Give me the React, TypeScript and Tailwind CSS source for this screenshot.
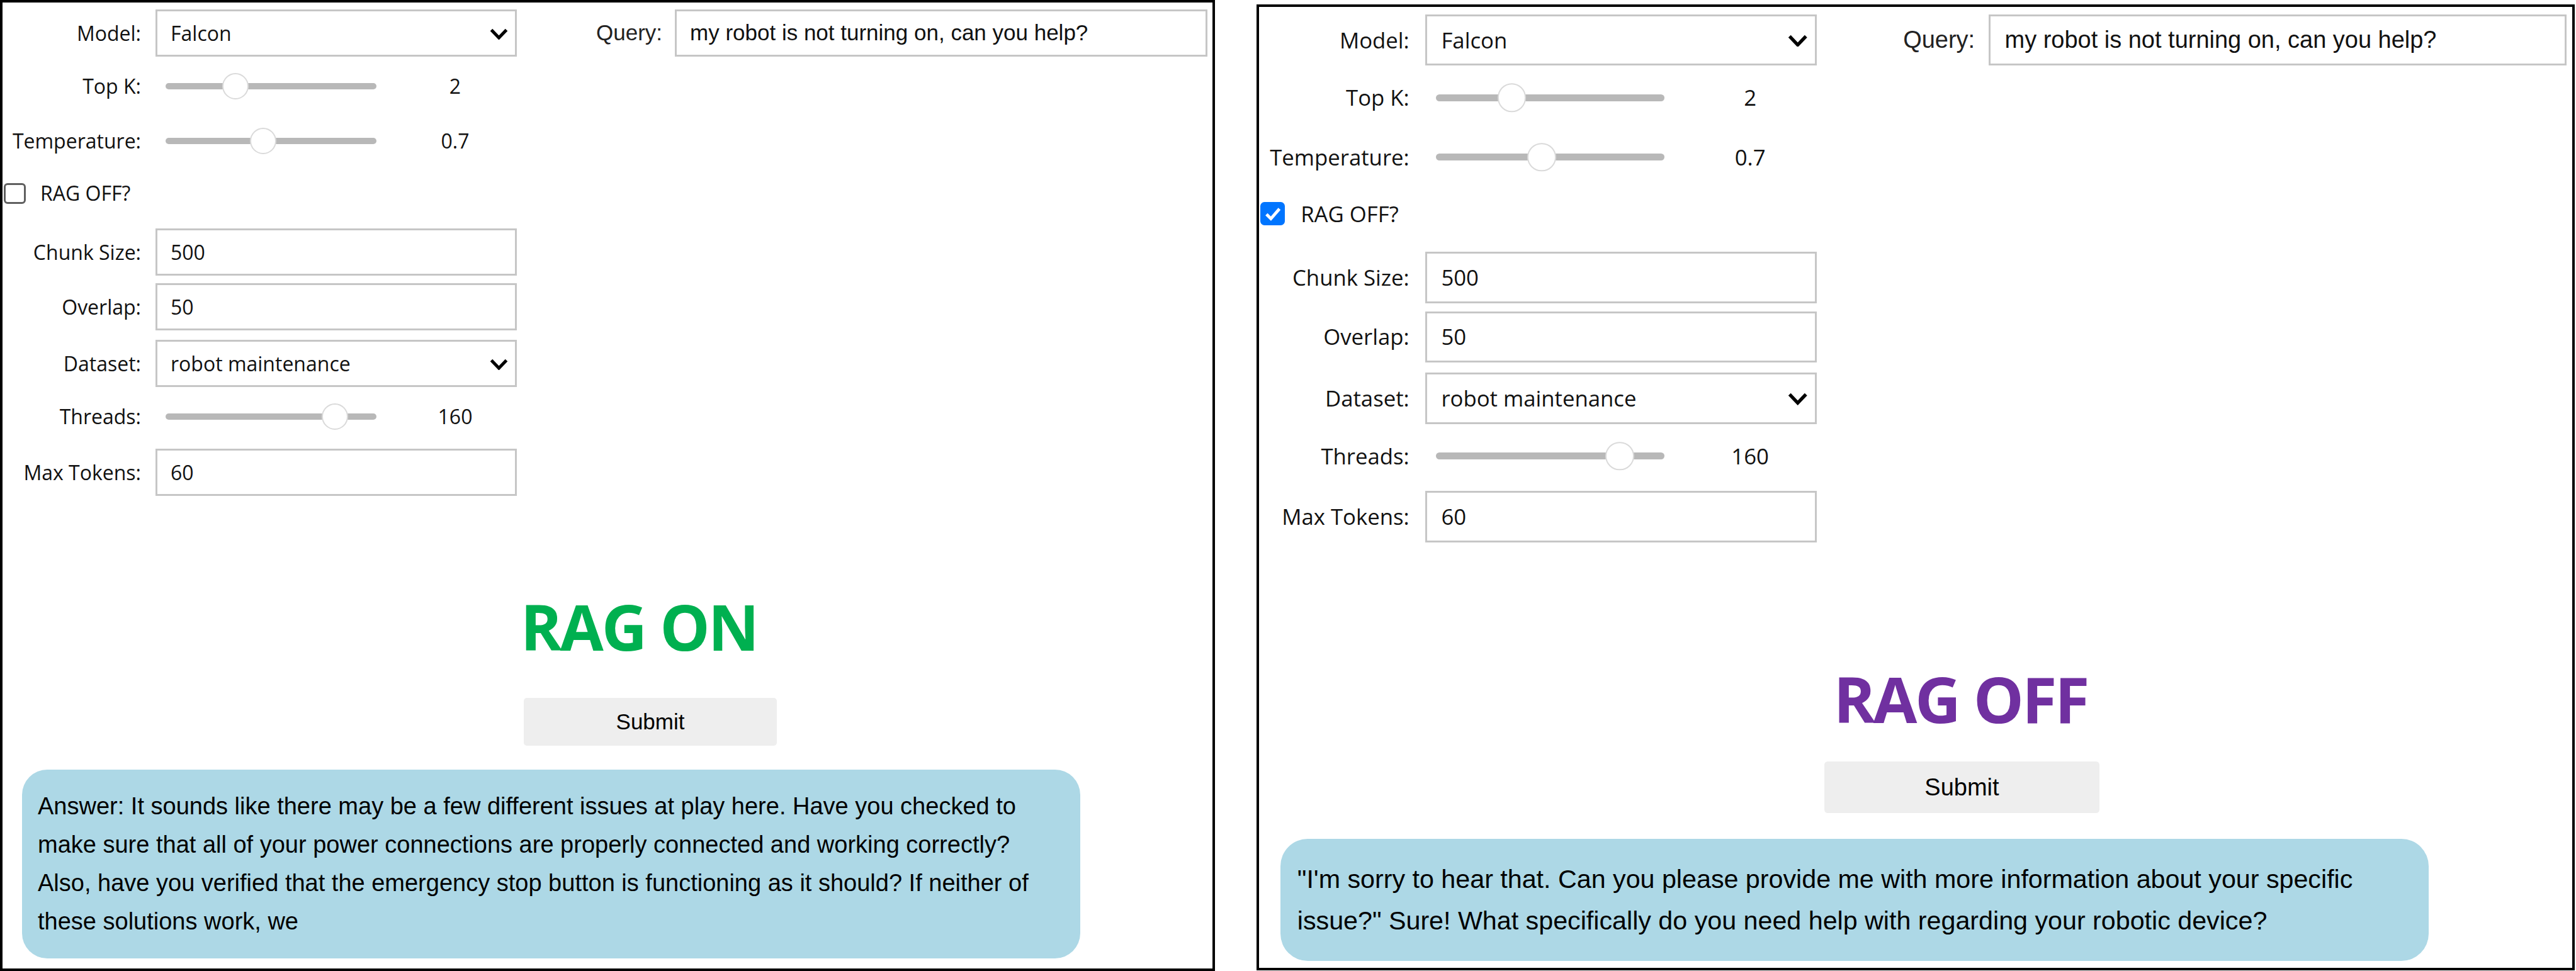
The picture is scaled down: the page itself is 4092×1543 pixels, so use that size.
import React from "react";

const ui = "font-['Open_Sans',sans-serif]";
const arial = "font-['Liberation_Sans',Arial,sans-serif]";

function Label({ children }: { children: React.ReactNode }) {
  return (
    <div className={`${ui} w-[220px] shrink-0 text-right text-[32px] text-[#111]`}>
      {children}
    </div>
  );
}

function Chevron() {
  return (
    <svg width="29" height="18" viewBox="0 0 29 18" className="mt-[2px]">
      <path d="M2.5 2.5 L14.5 15 L26.5 2.5" fill="none" stroke="#000" strokeWidth="5" />
    </svg>
  );
}

function Field({
  label,
  value,
  select,
  className,
}: {
  label: string;
  value: string;
  select?: boolean;
  className: string;
}) {
  return (
    <div className={`flex items-center h-[75px] ${className}`}>
      <Label>{label}</Label>
      <div
        className={`${ui} ml-[23px] w-[574px] h-full border-[3px] border-[#c6c6c6] flex items-center justify-between pl-[21px] pr-[11px] text-[32px] text-[#111]`}
      >
        <span>{value}</span>
        {select && <Chevron />}
      </div>
    </div>
  );
}

function Slider({
  label,
  thumb,
  value,
  className,
}: {
  label: string;
  thumb: number;
  value: string;
  className: string;
}) {
  return (
    <div className={`flex items-center h-[60px] ${className}`}>
      <Label>{label}</Label>
      <div className="ml-[39px] relative w-[335px] h-[10px] rounded-full bg-[#b8b8b8]">
        <div
          className="absolute top-1/2 -translate-y-1/2 w-[42px] h-[42px] rounded-full bg-white border-2 border-[#dadada]"
          style={{ left: thumb }}
        />
      </div>
      <div className={`${ui} ml-[85px] w-[80px] text-center text-[32px] text-[#111]`}>{value}</div>
    </div>
  );
}

function Panel({
  ragOff,
  tag,
  answer,
  className,
}: {
  ragOff: boolean;
  tag: React.ReactNode;
  answer: string;
  className: string;
}) {
  return (
    <div className={`w-[1930px] border-4 border-black bg-white flex flex-col ${className}`}>
      <div className="flex items-start">
        <div className="w-[817px] pt-[11px] flex flex-col">
          <Field label="Model:" value="Falcon" select className="" />
          <Slider label="Top K:" thumb={90} value="2" className="mt-[17px]" />
          <Slider label="Temperature:" thumb={134} value="0.7" className="mt-[27px]" />
          <div className="mt-[33px] h-[40px] flex items-center">
            {ragOff ? (
              <div className="ml-[2px] w-[36px] h-[34px] rounded-[6px] bg-[#0075ff] flex items-center justify-center">
                <svg width="26" height="22" viewBox="0 0 26 22">
                  <path d="M3.5 11.5 L10 18 L22.5 3.5" fill="none" stroke="#fff" strokeWidth="4.5" />
                </svg>
              </div>
            ) : (
              <div className="ml-[2px] w-[35px] h-[33px] rounded-[6px] border-[3px] border-[#5f5f5f] bg-white" />
            )}
            <span className={`${ui} ml-[23px] text-[32px] text-[#111]`}>RAG OFF?</span>
          </div>
          <Field label="Chunk Size:" value="500" className="mt-[36px]" />
          <Field label="Overlap:" value="50" className="mt-[12px]" />
          <Field label="Dataset:" value="robot maintenance" select className="mt-[15px]" />
          <Slider label="Threads:" thumb={248} value="160" className="mt-[17px]" />
          <Field label="Max Tokens:" value="60" className="mt-[21px]" />
        </div>
        <div className="ml-[126px] mt-[11px] flex items-center h-[75px]">
          <div className={`${arial} w-[104px] text-[35px] text-[#222]`}>Query:</div>
          <div
            className={`${arial} ml-[21px] w-[846px] h-full border-[3px] border-[#c6c6c6] flex items-center pl-[21px] text-[35px] text-[#111]`}
          >
            my robot is not turning on, can you help?
          </div>
        </div>
      </div>
      {tag}
      <div
        className={`${arial} ml-[828px] w-[402px] h-[76px] bg-[#eeeeee] rounded-[5px] flex items-center justify-center text-[35px] text-black`}
      >
        Submit
      </div>
      <div
        className={`${arial} ml-[31px] mt-[38px] w-[1681px] rounded-[40px] bg-[#add8e6] px-[25px] py-[28px] text-[38px] leading-[61px] text-black`}
      >
        {answer}
      </div>
    </div>
  );
}

export default function App() {
  return (
    <div className="w-[4092px] h-[1543px] bg-white flex items-start overflow-hidden">
      <Panel
        ragOff={false}
        className="h-[1543px] shrink-0"
        tag={
          <div
            className={`${ui} ml-[811px] mt-[157px] mb-[64px] w-[400px] text-center text-[100px] leading-[100px] font-bold tracking-[-3px] text-[#00b050]`}
          >
            RAG ON
          </div>
        }
        answer="Answer: It sounds like there may be a few different issues at play here. Have you checked to make sure that all of your power connections are properly connected and working correctly? Also, have you verified that the emergency stop button is functioning as it should? If neither of these solutions work, we"
      />
      <div className="ml-[66px] mt-[7px] shrink-0">
        <div className="[zoom:1.085]">
          <Panel
            ragOff={true}
            className="h-[1415px]"
            tag={
              <div
                className={`${ui} ml-[827px] mt-[183px] mb-[45px] w-[400px] text-center text-[93px] leading-[93px] font-bold tracking-[-3px] text-[#7030a0]`}
              >
                RAG OFF
              </div>
            }
            answer={"\"I'm sorry to hear that. Can you please provide me with more information about your specific issue?\" Sure! What specifically do you need help with regarding your robotic device?"}
          />
        </div>
      </div>
    </div>
  );
}
